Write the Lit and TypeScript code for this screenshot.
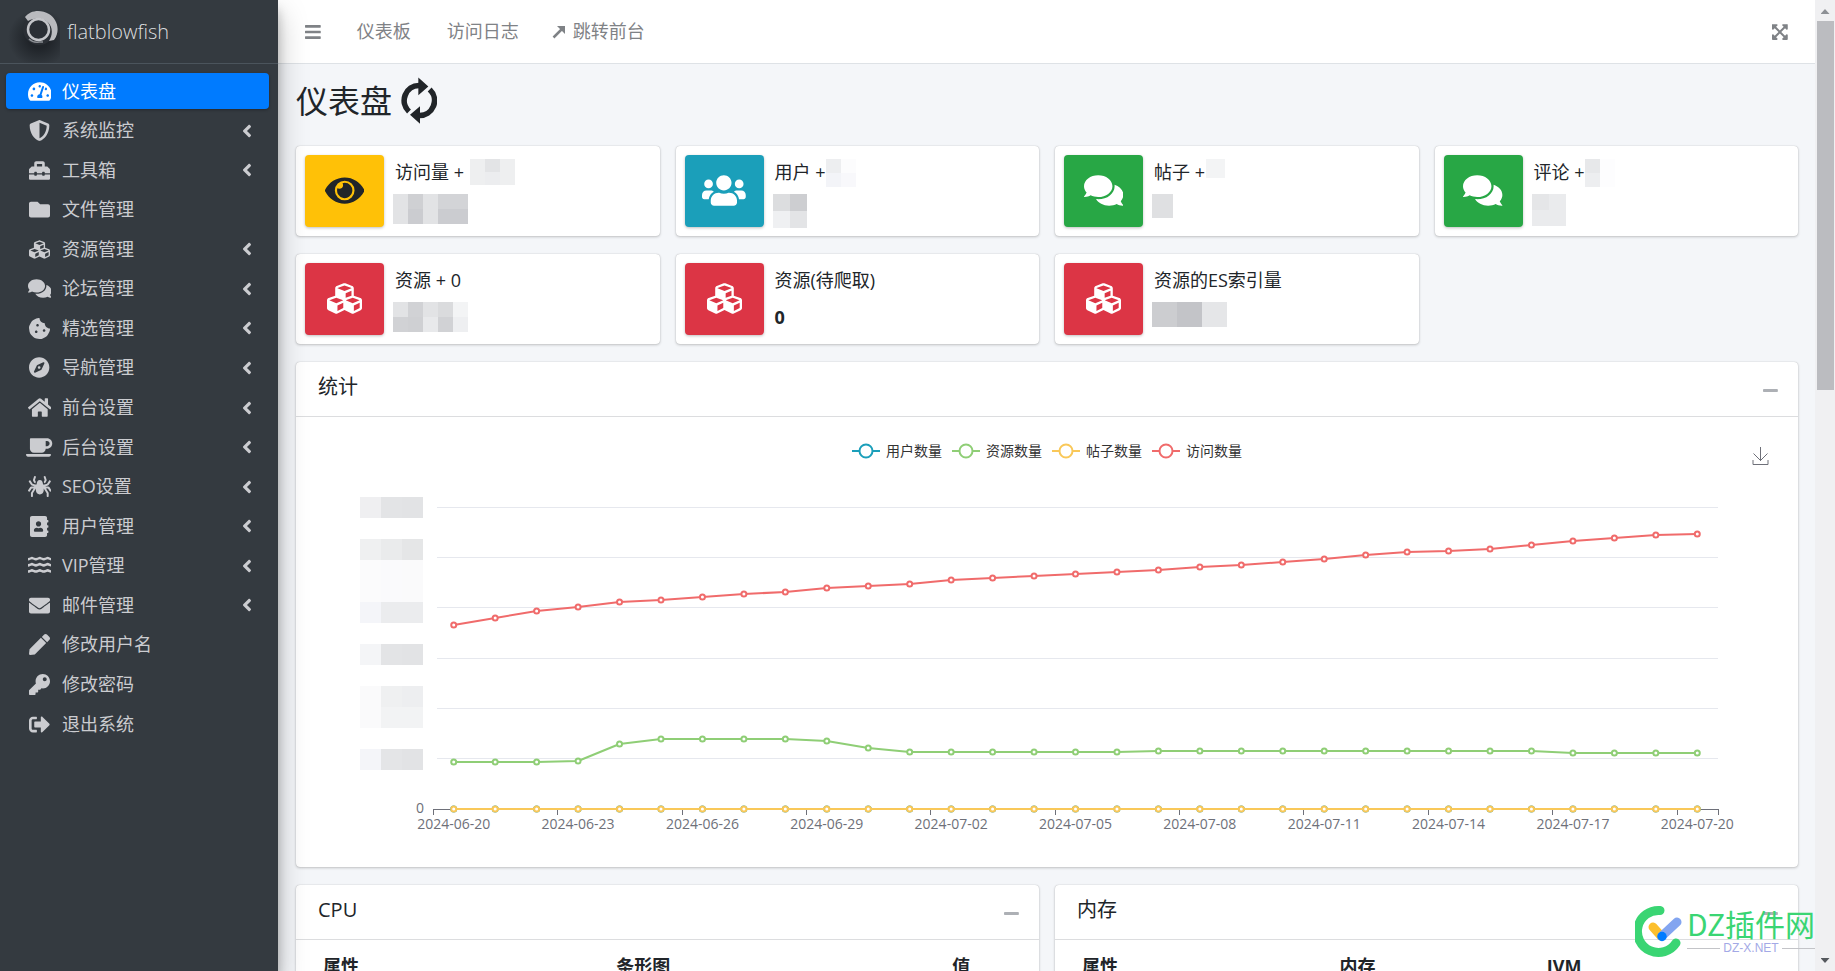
import { LitElement, html, css, svg } from "lit";
import { customElement, property, state } from "lit/decorators.js";
import { classMap } from "lit/directives/class-map.js";

type Icon = { w: number; d: string };

const ICONS: Record<string, Icon> = {
  gauge: { w: 576, d: "M288 32C128.94 32 0 160.94 0 320c0 52.8 14.25 102.26 39.06 144.8 5.61 9.62 16.3 15.2 27.44 15.2h443c11.14 0 21.83-5.58 27.44-15.2C561.75 422.26 576 372.8 576 320c0-159.06-128.94-288-288-288zm0 64c14.71 0 26.58 10.13 30.32 23.65-1.11 2.26-2.64 4.23-3.45 6.67l-9.22 27.67c-5.13 3.49-10.97 6.01-17.64 6.01-17.67 0-32-14.33-32-32S270.33 96 288 96zM96 384c-17.67 0-32-14.33-32-32s14.33-32 32-32 32 14.33 32 32-14.33 32-32 32zm48-160c-17.67 0-32-14.33-32-32s14.33-32 32-32 32 14.33 32 32-14.33 32-32 32zm246.77-72.41l-61.33 184C343.13 347.33 352 364.54 352 384c0 11.72-3.38 22.55-8.88 32H232.88c-5.5-9.45-8.88-20.28-8.88-32 0-33.94 26.5-61.43 59.9-63.59l61.34-184.01c4.17-12.56 17.73-19.45 30.36-15.17 12.57 4.19 19.35 17.79 15.17 30.36zm14.66 57.2l15.52-46.55c3.47-1.29 7.13-2.23 11.05-2.23 17.67 0 32 14.33 32 32s-14.33 32-32 32c-11.38-.01-20.89-6.28-26.57-15.22zM480 384c-17.67 0-32-14.33-32-32s14.33-32 32-32 32 14.33 32 32-14.33 32-32 32z" },
  shield: { w: 512, d: "M466.5 83.7l-192-80a48.15 48.15 0 0 0-36.9 0l-192 80C27.7 91.1 16 108.6 16 128c0 198.5 114.5 335.7 221.5 380.3 11.8 4.9 25.1 4.9 36.9 0C360.1 472.6 496 349.3 496 128c0-19.4-11.7-36.9-29.5-44.3zM256.1 446.3l-.1-381 175.9 73.3c-3.3 151.4-82.1 261.1-175.8 307.7z" },
  toolbox: { w: 512, d: "M502.63 214.63l-45.25-45.25c-6-6-14.14-9.37-22.63-9.37H384V80c0-26.51-21.49-48-48-48H176c-26.51 0-48 21.49-48 48v80H77.25c-8.49 0-16.62 3.37-22.63 9.37L9.37 214.63c-6 6-9.37 14.14-9.37 22.63V320h128v-16c0-8.84 7.16-16 16-16h32c8.84 0 16 7.16 16 16v16h128v-16c0-8.84 7.16-16 16-16h32c8.84 0 16 7.16 16 16v16h128v-82.75c0-8.48-3.37-16.62-9.37-22.62zM320 160H192V96h128v64zm64 208c0 8.84-7.16 16-16 16h-32c-8.84 0-16-7.16-16-16v-16H192v16c0 8.84-7.16 16-16 16h-32c-8.84 0-16-7.16-16-16v-16H0v96c0 17.67 14.33 32 32 32h448c17.67 0 32-14.33 32-32v-96H384v16z" },
  folder: { w: 512, d: "M464 128H272l-64-64H48C21.49 64 0 85.49 0 112v288c0 26.51 21.49 48 48 48h416c26.51 0 48-21.49 48-48V176c0-26.51-21.49-48-48-48z" },
  cubes: { w: 512, d: "M488.6 250.2L392 214V105.5c0-15-9.3-28.4-23.4-33.7l-100-37.5c-8.1-3.1-17.1-3.1-25.3 0l-100 37.5c-14.1 5.3-23.4 18.7-23.4 33.7V214l-96.6 36.2C9.3 255.5 0 268.9 0 283.9V394c0 13.6 7.7 26.1 19.9 32.2l100 50c10.1 5.1 22.1 5.1 32.2 0l103.9-52 103.9 52c10.1 5.1 22.1 5.1 32.2 0l100-50c12.2-6.1 19.9-18.6 19.9-32.2V283.9c0-15-9.3-28.4-23.4-33.7zM358 214.8l-85 31.9v-68.2l85-37v73.3zM154 104.1l102-38.2 102 38.2v.6l-102 41.4-102-41.4v-.6zm84 291.1l-85 42.5v-79.1l85-38.8v75.4zm0-112l-102 41.4-102-41.4v-.6l102-38.2 102 38.2v.6zm240 112l-85 42.5v-79.1l85-38.8v75.4zm0-112l-102 41.4-102-41.4v-.6l102-38.2 102 38.2v.6z" },
  comments: { w: 576, d: "M416 192c0-88.4-93.1-160-208-160S0 103.6 0 192c0 34.3 14.1 65.9 38 92-13.4 30.2-35.5 54.2-35.8 54.5-2.2 2.3-2.8 5.7-1.5 8.7S4.8 352 8 352c36.6 0 66.9-12.3 88.7-25 32.2 15.7 70.3 25 111.3 25 114.9 0 208-71.6 208-160zm122 220c23.9-26 38-57.7 38-92 0-66.9-53.5-124.2-129.3-148.1.9 6.6 1.3 13.3 1.3 20.1 0 105.9-107.7 192-240 192-10.8 0-21.3-.8-31.7-1.9C207.8 439.6 281.8 480 368 480c41 0 79.1-9.2 111.3-25 21.8 12.7 52.1 25 88.7 25 3.2 0 6.1-1.9 7.3-4.8 1.3-2.9.7-6.3-1.5-8.7-.3-.3-22.4-24.2-35.8-54.5z" },
  cookie: { w: 512, d: "M510.52 255.82c-69.97-.85-126.47-57.69-126.47-127.86-70.17 0-127-56.49-127.86-126.45-27.26-4.14-55.13.3-79.72 12.82l-69.13 35.22a132.221 132.221 0 0 0-57.79 57.81l-35.1 68.88a132.645 132.645 0 0 0-12.82 80.95l12.08 76.27a132.521 132.521 0 0 0 37.16 72.96l54.77 54.76a132.036 132.036 0 0 0 72.71 37.06l76.71 12.15c27.51 4.36 55.7-.11 80.53-12.76l69.13-35.21a132.273 132.273 0 0 0 57.79-57.81l35.1-68.88c12.56-24.64 17.01-52.58 12.91-79.91zM176 368c-17.67 0-32-14.33-32-32s14.33-32 32-32 32 14.33 32 32-14.33 32-32 32zm32-160c-17.67 0-32-14.33-32-32s14.33-32 32-32 32 14.33 32 32-14.33 32-32 32zm160 128c-17.67 0-32-14.33-32-32s14.33-32 32-32 32 14.33 32 32-14.33 32-32 32z" },
  compass: { w: 496, d: "M225.38 233.37c-12.5 12.5-12.5 32.76 0 45.25 12.49 12.5 32.76 12.5 45.25 0 12.5-12.5 12.5-32.76 0-45.25-12.5-12.49-32.76-12.49-45.25 0zM248 8C111.03 8 0 119.03 0 256s111.03 248 248 248 248-111.03 248-248S384.97 8 248 8zm126.14 148.05L308.17 300.4a31.938 31.938 0 0 1-15.77 15.77l-144.34 65.97c-16.65 7.61-33.81-9.55-26.2-26.2l65.98-144.35a31.938 31.938 0 0 1 15.77-15.77l144.34-65.97c16.65-7.6 33.8 9.55 26.19 26.2z" },
  home: { w: 576, d: "M280.37 148.26L96 300.11V464a16 16 0 0 0 16 16l112.06-.29a16 16 0 0 0 15.92-16V368a16 16 0 0 1 16-16h64a16 16 0 0 1 16 16v95.64a16 16 0 0 0 16 16.05L464 480a16 16 0 0 0 16-16V300L295.67 148.26a12.19 12.19 0 0 0-15.3 0zM571.6 251.47L488 182.56V44.05a12 12 0 0 0-12-12h-56a12 12 0 0 0-12 12v72.61L318.47 43a48 48 0 0 0-61 0L4.34 251.47a12 12 0 0 0-1.6 16.9l25.5 31A12 12 0 0 0 45.15 301l235.22-193.74a12.19 12.19 0 0 1 15.3 0L530.9 301a12 12 0 0 0 16.9-1.6l25.5-31a12 12 0 0 0-1.7-16.93z" },
  coffee: { w: 640, d: "M192 384h192c53 0 96-43 96-96h32c70.6 0 128-57.4 128-128S582.6 32 512 32H120c-13.3 0-24 10.7-24 24v232c0 53 43 96 96 96zM512 96c35.3 0 64 28.7 64 64s-28.7 64-64 64h-32V96h32zm47.7 384H48.3c-47.6 0-61-64-36-64h583.3c25 0 11.8 64-35.9 64z" },
  spider: { w: 576, d: "M151.17 167.35L177.1 176h4.67l5.22-26.12c.72-3.58 1.8-7.58 3.21-11.79l-20.29-40.58 23.8-71.39c2.79-8.38-1.73-17.44-10.12-20.24L168.42.82c-8.38-2.8-17.45 1.73-20.24 10.12l-25.89 77.68a32.04 32.04 0 0 0 1.73 24.43l27.15 54.3zm422.14 182.03l-52.75-79.12a32.002 32.002 0 0 0-26.62-14.25H416l68.99-24.36a32.03 32.03 0 0 0 16.51-12.61l53.6-80.41c4.9-7.35 2.91-17.29-4.44-22.19l-13.31-8.88c-7.35-4.9-17.29-2.91-22.19 4.44l-50.56 75.83L404.1 208H368l-10.37-51.85C355.44 145.18 340.26 96 288 96c-52.26 0-67.44 49.18-69.63 60.15L208 208h-36.1l-60.49-20.17L60.84 112c-4.9-7.35-14.83-9.34-22.19-4.44l-13.31 8.88c-7.35 4.9-9.34 14.83-4.44 22.19l53.6 80.41a32.03 32.03 0 0 0 16.51 12.61L160 256H82.06a32.02 32.02 0 0 0-26.63 14.25L2.69 349.38c-4.9 7.35-2.92 17.29 4.44 22.19l13.31 8.88c7.35 4.9 17.29 2.91 22.19-4.44l48-72h47.06l-60.83 97.33A31.988 31.988 0 0 0 72 418.3V496c0 8.84 7.16 16 16 16h16c8.84 0 16-7.16 16-16v-73.11l74.08-118.53c-1.01 14.05-2.08 28.11-2.08 42.21C192 399.64 232.76 448 288 448s96-48.36 96-101.43c0-14.1-1.08-28.16-2.08-42.21L456 422.89V496c0 8.84 7.16 16 16 16h16c8.84 0 16-7.16 16-16v-77.71c0-6-1.69-11.88-4.86-16.96L438.31 304h47.06l48 72c4.9 7.35 14.84 9.34 22.19 4.44l13.31-8.88c7.36-4.9 9.34-14.83 4.44-22.18zM406.09 97.51l-20.29 40.58c1.41 4.21 2.49 8.21 3.21 11.79l5.22 26.12h4.67l25.93-8.65 27.15-54.3a31.995 31.995 0 0 0 1.73-24.43l-25.89-77.68C425.03 2.56 415.96-1.98 407.58.82l-15.17 5.06c-8.38 2.8-12.91 11.86-10.12 20.24l23.8 71.39z" },
  book: { w: 448, d: "M436 160c6.6 0 12-5.4 12-12v-40c0-6.6-5.4-12-12-12h-20V48c0-26.5-21.5-48-48-48H48C21.5 0 0 21.5 0 48v416c0 26.5 21.5 48 48 48h320c26.5 0 48-21.5 48-48v-48h20c6.6 0 12-5.4 12-12v-40c0-6.6-5.4-12-12-12h-20v-64h20c6.6 0 12-5.4 12-12v-40c0-6.6-5.4-12-12-12h-20v-64h20zm-228-32c35.3 0 64 28.7 64 64s-28.7 64-64 64-64-28.7-64-64 28.7-64 64-64zm112 236.8c0 10.6-10 19.2-22.4 19.2H118.4C106 384 96 375.4 96 364.8v-19.2c0-31.8 30.1-57.6 67.2-57.6h5c12.3 5.1 25.7 8 39.8 8s27.6-2.9 39.8-8h5c37.1 0 67.2 25.8 67.2 57.6v19.2z" },
  water: { w: 576, d: "M0 72c48 0 62-32 96-32s52 32 96 32 62-32 96-32 52 32 96 32 62-32 96-32 48 32 96 32v62c-52 0-66-28-96-28s-52 28-96 28-62-28-96-28-52 28-96 28-62-28-96-28-48 28-96 28zM0 222c48 0 62-32 96-32s52 32 96 32 62-32 96-32 52 32 96 32 62-32 96-32 48 32 96 32v62c-52 0-66-28-96-28s-52 28-96 28-62-28-96-28-52 28-96 28-62-28-96-28-48 28-96 28zM0 372c48 0 62-32 96-32s52 32 96 32 62-32 96-32 52 32 96 32 62-32 96-32 48 32 96 32v62c-52 0-66-28-96-28s-52 28-96 28-62-28-96-28-52 28-96 28-62-28-96-28-48 28-96 28z" },
  envelope: { w: 512, d: "M502.3 190.8c3.9-3.1 9.7-.2 9.7 4.7V400c0 26.5-21.5 48-48 48H48c-26.5 0-48-21.5-48-48V195.6c0-5 5.7-7.8 9.7-4.7 22.4 17.4 52.1 39.5 154.1 113.6 21.1 15.4 56.7 47.8 92.2 47.6 35.7.3 72-32.8 92.3-47.6 102-74.1 131.6-96.3 154-113.7zM256 320c23.2.4 56.6-29.2 73.4-41.4 132.7-96.3 142.8-104.7 173.4-128.7 5.8-4.5 9.2-11.5 9.2-18.9v-19c0-26.5-21.5-48-48-48H48c-26.5 0-48 21.5-48 48v19c0 7.4 3.4 14.3 9.2 18.9 30.6 23.9 40.7 32.4 173.4 128.7 16.8 12.2 50.2 41.8 73.4 41.4z" },
  pen: { w: 512, d: "M290.74 93.24l128.02 128.02-277.99 277.99-114.14 12.6C11.35 513.54-1.56 500.62.14 485.34l12.7-114.22 277.9-277.88zm207.2-19.06l-60.11-60.11c-18.75-18.75-49.16-18.75-67.91 0l-56.55 56.55 128.02 128.02 56.55-56.55c18.75-18.76 18.75-49.16 0-67.91z" },
  key: { w: 512, d: "M512 176.001C512 273.203 433.202 352 336 352c-11.22 0-22.19-1.062-32.827-3.069l-24.012 27.014A23.999 23.999 0 0 1 261.223 384H224v40c0 13.255-10.745 24-24 24h-40v40c0 13.255-10.745 24-24 24H24c-13.255 0-24-10.745-24-24v-78.059c0-6.365 2.529-12.47 7.029-16.971l161.802-161.802C163.108 213.814 160 195.271 160 176 160 78.798 238.797.001 335.999 0 433.488-.001 512 78.511 512 176.001zM336 128c0 26.51 21.49 48 48 48s48-21.49 48-48-21.49-48-48-48-48 21.49-48 48z" },
  exit: { w: 512, d: "M497 273L329 441c-15 15-41 4.5-41-17v-96H152c-13.3 0-24-10.7-24-24v-96c0-13.3 10.7-24 24-24h136V88c0-21.4 25.9-32 41-17l168 168c9.3 9.4 9.3 24.6 0 34zM192 436v-40c0-6.6-5.4-12-12-12H96c-17.7 0-32-14.3-32-32V160c0-17.7 14.3-32 32-32h84c6.6 0 12-5.4 12-12V76c0-6.6-5.4-12-12-12H96c-53 0-96 43-96 96v192c0 53 43 96 96 96h84c6.6 0 12-5.4 12-12z" },
  eye: { w: 576, d: "M288 144a110.94 110.94 0 0 0-31.24 5 55.4 55.4 0 0 1 7.24 27 56 56 0 0 1-56 56 55.4 55.4 0 0 1-27-7.24A111.71 111.71 0 1 0 288 144zm284.52 97.4C518.29 135.59 410.93 64 288 64S57.68 135.64 3.48 241.41a32.35 32.35 0 0 0 0 29.19C57.71 376.41 165.07 448 288 448s230.32-71.64 284.52-177.41a32.35 32.35 0 0 0 0-29.19zM288 400a144 144 0 1 1 144-144 143.93 143.93 0 0 1-144 144z" },
  users: { w: 640, d: "M96 224c35.3 0 64-28.7 64-64s-28.7-64-64-64-64 28.7-64 64 28.7 64 64 64zm448 0c35.3 0 64-28.7 64-64s-28.7-64-64-64-64 28.7-64 64 28.7 64 64 64zm32 32h-64c-17.6 0-33.5 7.1-45.1 18.6 40.3 22.1 68.9 62 75.1 109.4h66c17.7 0 32-14.3 32-32v-32c0-35.3-28.7-64-64-64zm-256 0c61.9 0 112-50.1 112-112S381.9 32 320 32 208 82.1 208 144s50.1 112 112 112zm76.8 32h-8.3c-20.8 10-43.9 16-68.5 16s-47.6-6-68.5-16h-8.3C179.6 288 128 339.6 128 403.2V432c0 26.5 21.5 48 48 48h288c26.5 0 48-21.5 48-48v-28.8c0-63.6-51.6-115.2-115.2-115.2zm-223.7-13.4C161.5 263.1 145.6 256 128 256H64c-35.3 0-64 28.7-64 64v32c0 17.7 14.3 32 32 32h65.9c6.3-47.4 34.9-87.3 75.2-109.4z" },
  angle: { w: 256, d: "M31.7 239l136-136c9.4-9.4 24.6-9.4 33.9 0l22.6 22.6c9.4 9.4 9.4 24.6 0 33.9L127.9 256l96.4 96.4c9.4 9.4 9.4 24.6 0 33.9L201.7 409c-9.4 9.4-24.6 9.4-33.9 0l-136-136c-9.5-9.4-9.5-24.6-.1-34z" },
  bars: { w: 448, d: "M16 60h416a16 16 0 0 1 16 16v40a16 16 0 0 1-16 16H16a16 16 0 0 1-16-16V76a16 16 0 0 1 16-16zM16 220h416a16 16 0 0 1 16 16v40a16 16 0 0 1-16 16H16a16 16 0 0 1-16-16v-40a16 16 0 0 1 16-16zM16 380h416a16 16 0 0 1 16 16v40a16 16 0 0 1-16 16H16a16 16 0 0 1-16-16v-40a16 16 0 0 1 16-16z" },
  expand: { w: 448, d: "M448 344v112a23.94 23.94 0 0 1-24 24H312c-21.39 0-32.09-25.9-17-41l36.2-36.2L224 295.6 116.77 402.9 153 439c15.09 15.1 4.39 41-17 41H24a23.94 23.94 0 0 1-24-24V344c0-21.4 25.89-32.1 41-17l36.19 36.2L184.46 256 77.18 148.7 41 185c-15.1 15.1-41 4.4-41-17V56a23.94 23.94 0 0 1 24-24h112c21.39 0 32.09 25.9 17 41l-36.2 36.2L224 216.4l107.23-107.3L295 73c-15.09-15.1-4.39-41 17-41h112a23.94 23.94 0 0 1 24 24v112c0 21.4-25.89 32.1-41 17l-36.19-36.2L263.54 256l107.28 107.3L407 327.1c15.1-15.2 41-4.5 41 16.9z" },
  minus: { w: 448, d: "M416 208H32c-17.67 0-32 14.33-32 32v32c0 17.67 14.33 32 32 32h384c17.67 0 32-14.33 32-32v-32c0-17.67-14.33-32-32-32z" },
};

/* size is the height in pixels of the 512-unit em box */
const icon = (name: string, size: number) => {
  const i = ICONS[name];
  return html`<svg class="icon" viewBox="0 0 ${i.w} 512" width=${(i.w * size) / 512} height=${size} fill="currentColor" aria-hidden="true"><path d=${i.d}></path></svg>`;
};

/* a block of plain tiles that stands in for a hidden figure */
const tiles = (tw: number, th: number, rows: string[][]) => html`<svg class="tiles" width=${tw * rows[0].length} height=${th * rows.length} shape-rendering="crispEdges" aria-hidden="true">
  ${rows.map((r, y) => r.map((c, x) => svg`<rect x=${x * tw} y=${y * th} width=${tw} height=${th} fill=${c}></rect>`))}
</svg>`;

const NAV: [string, string, boolean][] = [
  ["gauge", "仪表盘", false],
  ["shield", "系统监控", true],
  ["toolbox", "工具箱", true],
  ["folder", "文件管理", false],
  ["cubes", "资源管理", true],
  ["comments", "论坛管理", true],
  ["cookie", "精选管理", true],
  ["compass", "导航管理", true],
  ["home", "前台设置", true],
  ["coffee", "后台设置", true],
  ["spider", "SEO设置", true],
  ["book", "用户管理", true],
  ["water", "VIP管理", true],
  ["envelope", "邮件管理", true],
  ["pen", "修改用户名", false],
  ["key", "修改密码", false],
  ["exit", "退出系统", false],
];

const SERIES = [
  { name: "用户数量", color: "#1b9fba" },
  { name: "资源数量", color: "#8fce76" },
  { name: "帖子数量", color: "#f9c859" },
  { name: "访问数量", color: "#f06b6b" },
];

const VISITS = [184, 191, 198, 202, 207, 209, 212, 215, 217, 221, 223, 225, 229, 231, 233, 235, 237, 239, 242, 244, 247, 250, 254, 257, 258, 260, 264, 268, 271, 274, 275];
const RESOURCES = [47, 47, 47, 48, 65, 70, 70, 70, 70, 68, 61, 57, 57, 57, 57, 57, 57, 58, 58, 58, 58, 58, 58, 58, 58, 58, 58, 56, 56, 56, 56];
const ZEROS = VISITS.map(() => 0);
const AXIS_MAX = 302;

const day = (i: number) => new Date(Date.UTC(2024, 5, 20 + i)).toISOString().slice(0, 10);

@customElement("line-chart")
export class LineChart extends LitElement {
  static styles = css`
    :host { display: block; position: relative; height: 450px; }
    svg { display: block; }
    .plot { width: 100%; height: 100%; }
    text { font: 14px/20px "Open Sans", "Noto Sans CJK SC", sans-serif; fill: #6e7079; }
    .legend {
      position: absolute; inset: 24px 0 auto; display: flex; justify-content: center; gap: 10px;
      margin: 0; padding: 0; list-style: none;
      font: 14px/20px "Open Sans", "Noto Sans CJK SC", sans-serif; color: #333;
    }
    .legend li { display: flex; align-items: center; gap: 6px; }
    .save { position: absolute; top: 29px; right: 29px; padding: 0; border: 0; background: none; color: #6e7079; }
  `;

  @state() private width = 1500;
  private observer?: ResizeObserver;

  firstUpdated() {
    this.width = this.clientWidth;
    this.observer = new ResizeObserver(() => { this.width = this.clientWidth; });
    this.observer.observe(this);
  }

  disconnectedCallback() {
    super.disconnectedCallback();
    this.observer?.disconnect();
  }

  render() {
    const left = 137, right = this.width - 80, base = 392, top = 90;
    const band = (right - left) / VISITS.length;
    const px = (i: number) => left + band * (i + 0.5);
    const py = (v: number) => base - (v * (base - top)) / AXIS_MAX;
    const line = (data: number[], color: string) => svg`
      <polyline fill="none" stroke=${color} stroke-width="2" stroke-linejoin="bevel" points=${data.map((v, i) => `${px(i)},${py(v)}`).join(" ")}></polyline>
      ${data.map((v, i) => svg`<circle cx=${px(i)} cy=${py(v)} r="2.5" fill="#fff" stroke=${color} stroke-width="2"></circle>`)}`;
    const grid = [1, 2, 3, 4, 5, 6].map((n) => Math.floor(base - (n * (base - top)) / 6) + 0.5);
    const veil: [number, string[]][] = [
      [80, ["#efeff1", "#e3e4e6", "#e2e3e5"]],
      [122, ["#eff0f1", "#eaebec", "#e5e6e7"]],
      [143, ["#fbfbfc", "#fafafc", "#fafafb"]],
      [164, ["#fbfbfc", "#fafafc", "#fafafb"]],
      [185, ["#f4f5f9", "#ebecee", "#ebecee"]],
      [227, ["#f4f5f7", "#e3e4e6", "#e2e3e5"]],
      [269, ["#fafafb", "#eff0f1", "#edeef0"]],
      [290, ["#fafafb", "#f2f3f4", "#f2f3f4"]],
      [332, ["#f4f5f9", "#e4e5e7", "#e2e3e5"]],
    ];
    return html`
      <svg class="plot" role="img" aria-label="统计">
        ${veil.map(([y, cells]) => cells.map((c, i) => svg`<rect x=${64 + i * 21} y=${y} width="21" height="21" fill=${c}></rect>`))}
        ${grid.map((y) => svg`<line x1=${left + 4} x2=${right} y1=${y} y2=${y} stroke="#e6e8ee"></line>`)}
        <line x1=${left} x2=${right} y1="392.5" y2="392.5" stroke="#6e7079"></line>
        ${Array.from({ length: 12 }, (_, k) => {
          const x = Math.round(Math.min(left + band * 3 * k, right)) + 0.5;
          return svg`<line x1=${x} x2=${x} y1="392" y2="398" stroke="#6e7079"></line>`;
        })}
        <text x="128" y="396" text-anchor="end">0</text>
        ${Array.from({ length: 11 }, (_, k) => svg`<text x=${px(k * 3)} y="412" text-anchor="middle">${day(k * 3)}</text>`)}
        ${line(ZEROS, SERIES[0].color)}
        ${line(RESOURCES, SERIES[1].color)}
        ${line(ZEROS, SERIES[2].color)}
        ${line(VISITS, SERIES[3].color)}
      </svg>
      <ul class="legend">
        ${SERIES.map((s) => html`<li>
          <svg width="28" height="16" aria-hidden="true">
            <path d="M0 8h28" stroke=${s.color} stroke-width="2"></path>
            <circle cx="14" cy="8" r="6.5" fill="#fff" stroke=${s.color} stroke-width="2"></circle>
          </svg>${s.name}</li>`)}
      </ul>
      <button class="save" aria-label="保存为图片">
        <svg width="17" height="20" fill="none" stroke="currentColor"><path d="M8.5 1v14M1.500 7.500l7 7 7-7M1 14v4.500h15V14"></path></svg>
      </button>`;
  }
}

@customElement("panel-card")
export class PanelCard extends LitElement {
  static styles = css`
    :host { display: block; background: #fff; border-radius: 4px; box-shadow: 0 0 1px rgba(0,0,0,.25), 0 1px 3px rgba(0,0,0,.2); }
    header { display: flex; align-items: center; justify-content: space-between; height: 54px; padding: 0 20px 0 22px; border-bottom: 1px solid #dcdddf; }
    h2 { margin: 0 0 4px; font-size: 20px; line-height: 30px; font-weight: 400; }
    button { display: flex; padding: 0; border: 0; background: none; color: #adb0b5; margin-top: 3px; }
  `;
  @property() heading = "";
  render() {
    return html`<header><h2>${this.heading}</h2><button aria-label="折叠">${icon("minus", 17)}</button></header><slot></slot>`;
  }
}

type Stat = { icon: string; tone: string; label: string; extra?: unknown; value: unknown };

const STATS: Stat[] = [
  { icon: "eye", tone: "yellow", label: "访问量 +", extra: html`&nbsp;${tiles(15, 13, [["#eeeff0", "#e3e4e6", "#eeeff0"], ["#eeeff0", "#ecedef", "#eeeff0"]])}`, value: tiles(15, 15, [["#e2e3e5", "#cfd0d3", "#e2e3e5", "#d3d4d7", "#d3d4d7"], ["#e2e3e5", "#cbccd0", "#e2e3e5", "#cbccd0", "#cbccd0"]]) },
  { icon: "users", tone: "teal", label: "用户 +", extra: tiles(15, 14, [["#edeef0", "#fcfcfd"], ["#f3f4f8", "#f8f8fb"]]), value: tiles(17, 17, [["#dcdddf", "#cdced1"], ["#eff0f2", "#e3e4e6"]]) },
  { icon: "comments", tone: "green", label: "帖子 +", extra: tiles(19, 19, [["#f3f4f5"]]), value: tiles(21, 24, [["#dfe0e2"]]) },
  { icon: "comments", tone: "green", label: "评论 +", extra: tiles(15, 14, [["#e7e8ea", "#fdfdfe"], ["#edeef0", "#fdfdfe"]]), value: tiles(17, 16, [["#e5e6e8", "#eaebed"], ["#eaebed", "#eaebed"]]) },
  { icon: "cubes", tone: "red", label: "资源 + 0", value: tiles(15, 15, [["#e2e3e5", "#d1d2d5", "#e2e3e5", "#dadbdd", "#f3f4f5"], ["#d1d2d5", "#cfd0d3", "#e8e9eb", "#d1d2d5", "#eeeff1"]]) },
  { icon: "cubes", tone: "red", label: "资源(待爬取)", value: "0" },
  { icon: "cubes", tone: "red", label: "资源的ES索引量", value: tiles(25, 25, [["#cccdd0", "#c3c4c8", "#e5e6e8"]]) },
];

@customElement("app-root")
export class AppRoot extends LitElement {
  static styles = css`
    :host {
      display: flex; height: 100vh; overflow: hidden; background: #f4f6f9; color: #212529;
      font: 18px/27px "Open Sans", "Noto Sans CJK SC", sans-serif;
    }
    a { color: inherit; text-decoration: none; }
    .icon, .tiles { display: block; flex: none; }
    button { padding: 0; border: 0; background: none; color: inherit; font: inherit; }

    .sidebar { position: relative; z-index: 2; flex: none; width: 278px; background: #343a40; color: #cbccd0; box-shadow: 0 14px 28px rgba(0,0,0,.25), 0 10px 10px rgba(0,0,0,.22); }
    .brand { display: flex; align-items: center; gap: 7px; height: 63px; padding-left: 4px; border-bottom: 1px solid #4b545c; overflow: hidden; font-size: 20px; font-weight: 300; color: #dcdddf; }
    .menu { display: flex; flex-direction: column; justify-content: space-between; height: 669px; margin: 9px 9px 0 6px; padding: 0; list-style: none; }
    .item { display: flex; align-items: center; height: 36px; padding-right: 17px; border-radius: 4px; }
    .item .glyph { display: flex; justify-content: center; width: 67px; margin-right: -11px; }
    .item .name { flex: 1; }
    .active { background: #007bff; color: #fff; box-shadow: 0 1px 3px rgba(0,0,0,.3); }

    .column { flex: 1; min-width: 0; display: flex; flex-direction: column; }
    .topbar { flex: none; display: flex; align-items: center; gap: 36px; height: 63px; padding: 0 27px; background: #fff; border-bottom: 1px solid #dee2e6; color: #7f8286; }
    .topbar a { display: flex; align-items: center; gap: 8px; }
    .topbar .jump { margin-left: -3px; }
    .topbar .grow { flex: 1; }

    main { padding: 13px 17px 0 18px; }
    .title { display: flex; align-items: center; gap: 9px; margin-bottom: 21px; height: 48px; }
    .title .icon { margin-bottom: 2px; }
    h1 { margin: 0; font-size: 32px; line-height: 48px; font-weight: 400; }
    .stats { display: grid; grid-template-columns: repeat(4, 1fr); gap: 18px 16px; margin-bottom: 18px; }
    .stat { display: flex; gap: 11px; padding: 9px; background: #fff; border-radius: 4px; box-shadow: 0 0 1px rgba(0,0,0,.25), 0 1px 3px rgba(0,0,0,.2); }
    .badge { display: flex; flex: none; align-items: center; justify-content: center; width: 79px; height: 72px; border-radius: 4px; color: #fff; box-shadow: 0 1px 3px rgba(0,0,0,.25); }
    .badge .icon { margin-bottom: 2px; }
    .yellow { background: #ffc107; color: #212529; }
    .teal { background: #1b9fba; }
    .green { background: #28a745; }
    .red { background: #dc3545; }
    .label { display: flex; gap: 1px; height: 36px; line-height: 34px; white-space: nowrap; }
    .label .tiles { margin-top: 4px; }
    .value { display: flex; height: 36px; line-height: 36px; font-weight: 700; }
    .value .tiles { margin: 3px 0 0 -2px; }
    .pair { display: grid; grid-template-columns: 1fr 1fr; gap: 16px; margin-top: 18px; }
    .table { padding: 0 14px; }
    table { width: 100%; border-collapse: collapse; table-layout: fixed; }
    th { padding: 13px; text-align: left; line-height: 27px; }

    .scroll { flex: none; display: flex; flex-direction: column; align-items: center; gap: 7px; width: 20px; background: #f0f0f2; }
    .scroll .arrow { width: 9px; height: 5px; margin-top: 9px; background: #8d9095; clip-path: polygon(50% 0, 100% 100%, 0 100%); }
    .scroll .thumb { width: 17px; height: 38%; background: #bbbcc0; }
    .scroll .down { margin-top: auto; margin-bottom: 8px; background: #55585d; clip-path: polygon(0 0, 100% 0, 50% 100%); }

    .mark { position: absolute; z-index: 3; right: 20px; bottom: 14px; display: flex; gap: 4px; color: #3ad573; }
    .mark .word { font: 30px/36px "Noto Sans CJK SC", sans-serif; white-space: nowrap; }
    .mark .net { display: flex; align-items: center; gap: 3px; font: 12px/14px "Liberation Sans", sans-serif; color: #a3a9e6; }
    .mark .net::before, .mark .net::after { content: ""; flex: 1; height: 1px; background: #c3c4c8; }
  `;

  @state() private current = 0;

  render() {
    return html`
      <aside class="sidebar">
        <a class="brand" href="#">
          <svg width="56" height="63" aria-hidden="true">
            <defs><radialGradient id="shade"><stop offset=".35" stop-color="#1c2025" stop-opacity=".85"></stop><stop offset="1" stop-color="#1c2025" stop-opacity="0"></stop></radialGradient></defs>
            <ellipse cx="35" cy="38" rx="31" ry="29" fill="url(#shade)"></ellipse>
            <circle cx="35" cy="29" r="16" fill="#2b2f35"></circle>
            <path d="M21 17C26 10 37 9 45 14s12 16 5 26l-5 1c3-5 4-11 1-16S35 15 24 21z" fill="#b9babe"></path>
            <circle cx="34.500" cy="29.500" r="10.500" fill="#2b2f35" stroke="#c4c5c9" stroke-width="2.500"></circle>
            <path d="M25 39q4 4 10 3l4 0" fill="none" stroke="#8b8e93" stroke-width="1.500"></path>
          </svg>
          <span>flatblowfish</span>
        </a>
        <nav><ul class="menu">
          ${NAV.map(([ic, name, more], i) => html`<li><a href="#" class=${classMap({ item: true, active: i === this.current })}
            @click=${(e: Event) => { e.preventDefault(); this.current = i; }}>
            <span class="glyph">${icon(ic, 21)}</span><span class="name">${name}</span>${more ? icon("angle", 20) : ""}
          </a></li>`)}
        </ul></nav>
      </aside>

      <div class="column">
        <header class="topbar">
          <button aria-label="菜单">${icon("bars", 18)}</button>
          <a href="#">仪表板</a>
          <a href="#">访问日志</a>
          <a class="jump" href="#"><svg width="13" height="14" aria-hidden="true"><path d="M1.500 12.500L10 4" stroke="currentColor" stroke-width="2.500"></path><path d="M5 1h8v8z" fill="currentColor"></path></svg>跳转前台</a>
          <span class="grow"></span>
          <button aria-label="全屏">${icon("expand", 18)}</button>
        </header>
        <main>
          <div class="title">
            <h1>仪表盘</h1>
            <button aria-label="刷新">
              <svg class="icon" viewBox="0 0 108 140" width="36" height="47"><g fill="none" stroke="#212529" stroke-width="17"><path d="M24 103A45 45 0 0 1 54 25"></path><path d="M86 37A45 45 0 0 1 54 115"></path></g><path d="M52 1l30 27-30 26zM57 87l-30 26 30 27z" fill="#212529"></path></svg>
            </button>
          </div>
          <section class="stats">
            ${STATS.map((s) => html`<div class="stat">
              <span class="badge ${s.tone}">${icon(s.icon, 35)}</span>
              <div><div class="label">${s.label}${s.extra ?? ""}</div><div class="value">${s.value}</div></div>
            </div>`)}
          </section>
          <panel-card heading="统计"><line-chart></line-chart></panel-card>
          <div class="pair">
            <panel-card heading="CPU"><div class="table"><table>
              <colgroup><col width="41%"><col width="47%"><col width="12%"></colgroup>
              <thead><tr><th>属性</th><th>条形图</th><th>值</th></tr></thead>
            </table></div></panel-card>
            <panel-card heading="内存"><div class="table"><table>
              <colgroup><col width="36%"><col width="29%"><col width="35%"></colgroup>
              <thead><tr><th>属性</th><th>内存</th><th>JVM</th></tr></thead>
            </table></div></panel-card>
          </div>
        </main>
      </div>

      <div class="scroll" aria-hidden="true"><i class="arrow"></i><i class="thumb"></i><i class="arrow down"></i></div>

      <div class="mark">
        <svg width="48" height="52" fill="none" stroke-linecap="round" aria-hidden="true">
          <path d="M25 5.500A21 21 0 1 0 41 38" stroke="#3ad573" stroke-width="9"></path>
          <path d="M18 22l8 9" stroke="#fcbf2d" stroke-width="9"></path>
          <path d="M27 31l15-14" stroke="#83a5f0" stroke-width="9"></path>
          <circle cx="27" cy="31.500" r="4.700" fill="#007bff"></circle>
        </svg>
        <div><div class="word">DZ插件网</div><div class="net">DZ-X.NET</div></div>
      </div>`;
  }
}
